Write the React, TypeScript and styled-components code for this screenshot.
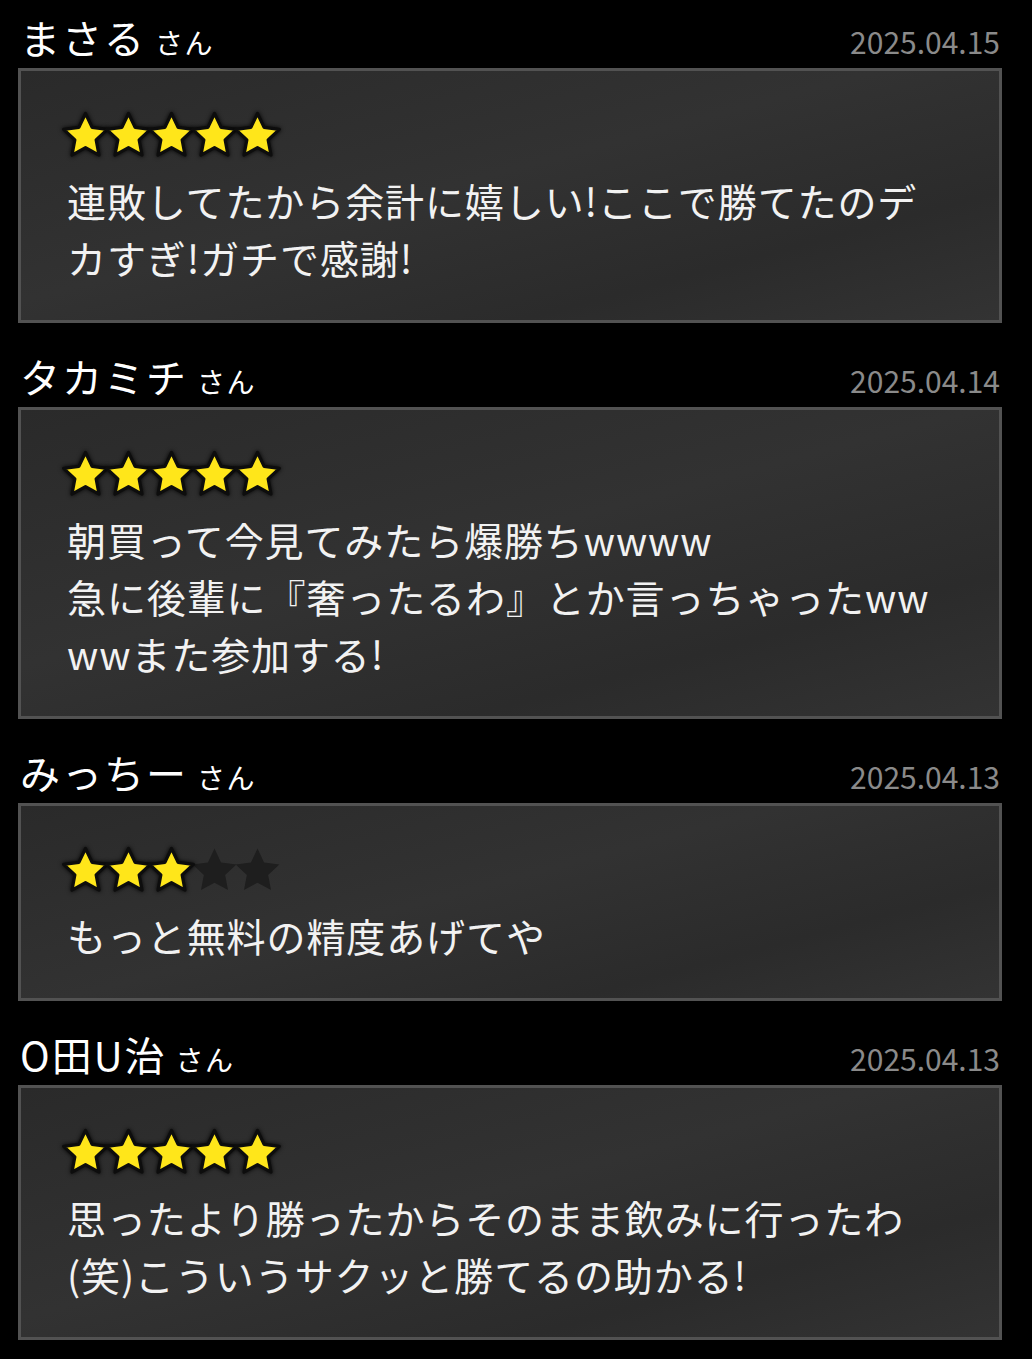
import React from "react";
import styled, { createGlobalStyle } from "styled-components";

const Global = createGlobalStyle`
  html, body { margin: 0; padding: 0; background: #000; }
  body { font-family: "Noto Sans CJK JP", "Noto Sans", sans-serif; color: #fff; }
`;

const Page = styled.div`
  background: #000;
  padding: 6px 30px 20px 18px;
  display: flex;
  flex-direction: column;
  gap: 22px;
`;

const Review = styled.section`
  display: flex;
  flex-direction: column;
`;

const Header = styled.div`
  height: 62px;
  display: flex;
  align-items: baseline;
  justify-content: space-between;
  padding-left: 2px;
  line-height: 62px;
`;

const Name = styled.span`
  font-size: 40px;
  color: #fff;
  letter-spacing: 2px;
`;

const Honorific = styled.span`
  font-size: 28px;
  margin-left: 9px;
  color: #fff;
  letter-spacing: 1.5px;
`;

const DateText = styled.span`
  font-size: 30px;
  color: #8a8a8a;
  padding-right: 2px;
`;

const Card = styled.div`
  border: 3px solid #525252;
  background: linear-gradient(165deg, #2a2a2a 0%, #323232 45%, #2b2b2b 75%, #333 100%);
  padding: 42px 56px 34px 46px;
  display: flex;
  flex-direction: column;
  gap: 15px;
`;

const Stars = styled.div`
  display: flex;
  height: 44px;
  align-items: center;
  margin-left: -3px;
`;

const StarSvg = styled.svg<{ $on: boolean }>`
  width: 43px;
  height: 44px;
  overflow: visible;
  filter: ${(p) => (p.$on ? "drop-shadow(0 0 2px rgba(0,0,0,0.9))" : "none")};
`;

const Body = styled.p`
  margin: 0;
  font-size: 39px;
  line-height: 57px;
  color: #f2f2f2;
  letter-spacing: 0.9px;
  white-space: pre-line;
  word-break: break-all;
`;

const starPoints = (() => {
  const cx = 21.5;
  const cy = 23.5;
  const R = 23;
  const r = 11.2;
  const pts: string[] = [];
  for (let i = 0; i < 10; i++) {
    const a = -Math.PI / 2 + (i * Math.PI) / 5;
    const rad = i % 2 === 0 ? R : r;
    pts.push(`${(cx + rad * Math.cos(a)).toFixed(2)},${(cy + rad * Math.sin(a)).toFixed(2)}`);
  }
  return pts.join(" ");
})();

const Star: React.FC<{ on: boolean }> = ({ on }) => (
  <StarSvg $on={on} viewBox="0 0 43 44">
    <polygon
      points={starPoints}
      fill={on ? "#FFE61A" : "#1e1e1e"}
      stroke={on ? "#0d0d0d" : "none"}
      strokeWidth={3.2}
      strokeLinejoin="round"
    />
  </StarSvg>
);

const reviews = [
  {
    name: "まさる",
    date: "2025.04.15",
    rating: 5,
    text: "連敗してたから余計に嬉しい!ここで勝てたのデカすぎ!ガチで感謝!",
  },
  {
    name: "タカミチ",
    date: "2025.04.14",
    rating: 5,
    text: "朝買って今見てみたら爆勝ちwwww\n急に後輩に『奢ったるわ』とか言っちゃったwwwwまた参加する!",
  },
  {
    name: "みっちー",
    date: "2025.04.13",
    rating: 3,
    text: "もっと無料の精度あげてや",
  },
  {
    name: "O田U治",
    date: "2025.04.13",
    rating: 5,
    text: "思ったより勝ったからそのまま飲みに行ったわ(笑)こういうサクッと勝てるの助かる!",
  },
];

export default function App() {
  return (
    <>
      <Global />
      <Page>
        {reviews.map((r, i) => (
          <Review key={i}>
            <Header>
              <div>
                <Name>{r.name}</Name>
                <Honorific>さん</Honorific>
              </div>
              <DateText>{r.date}</DateText>
            </Header>
            <Card>
              <Stars>
                {[0, 1, 2, 3, 4].map((s) => (
                  <Star key={s} on={s < r.rating} />
                ))}
              </Stars>
              <Body>{r.text}</Body>
            </Card>
          </Review>
        ))}
      </Page>
    </>
  );
}
